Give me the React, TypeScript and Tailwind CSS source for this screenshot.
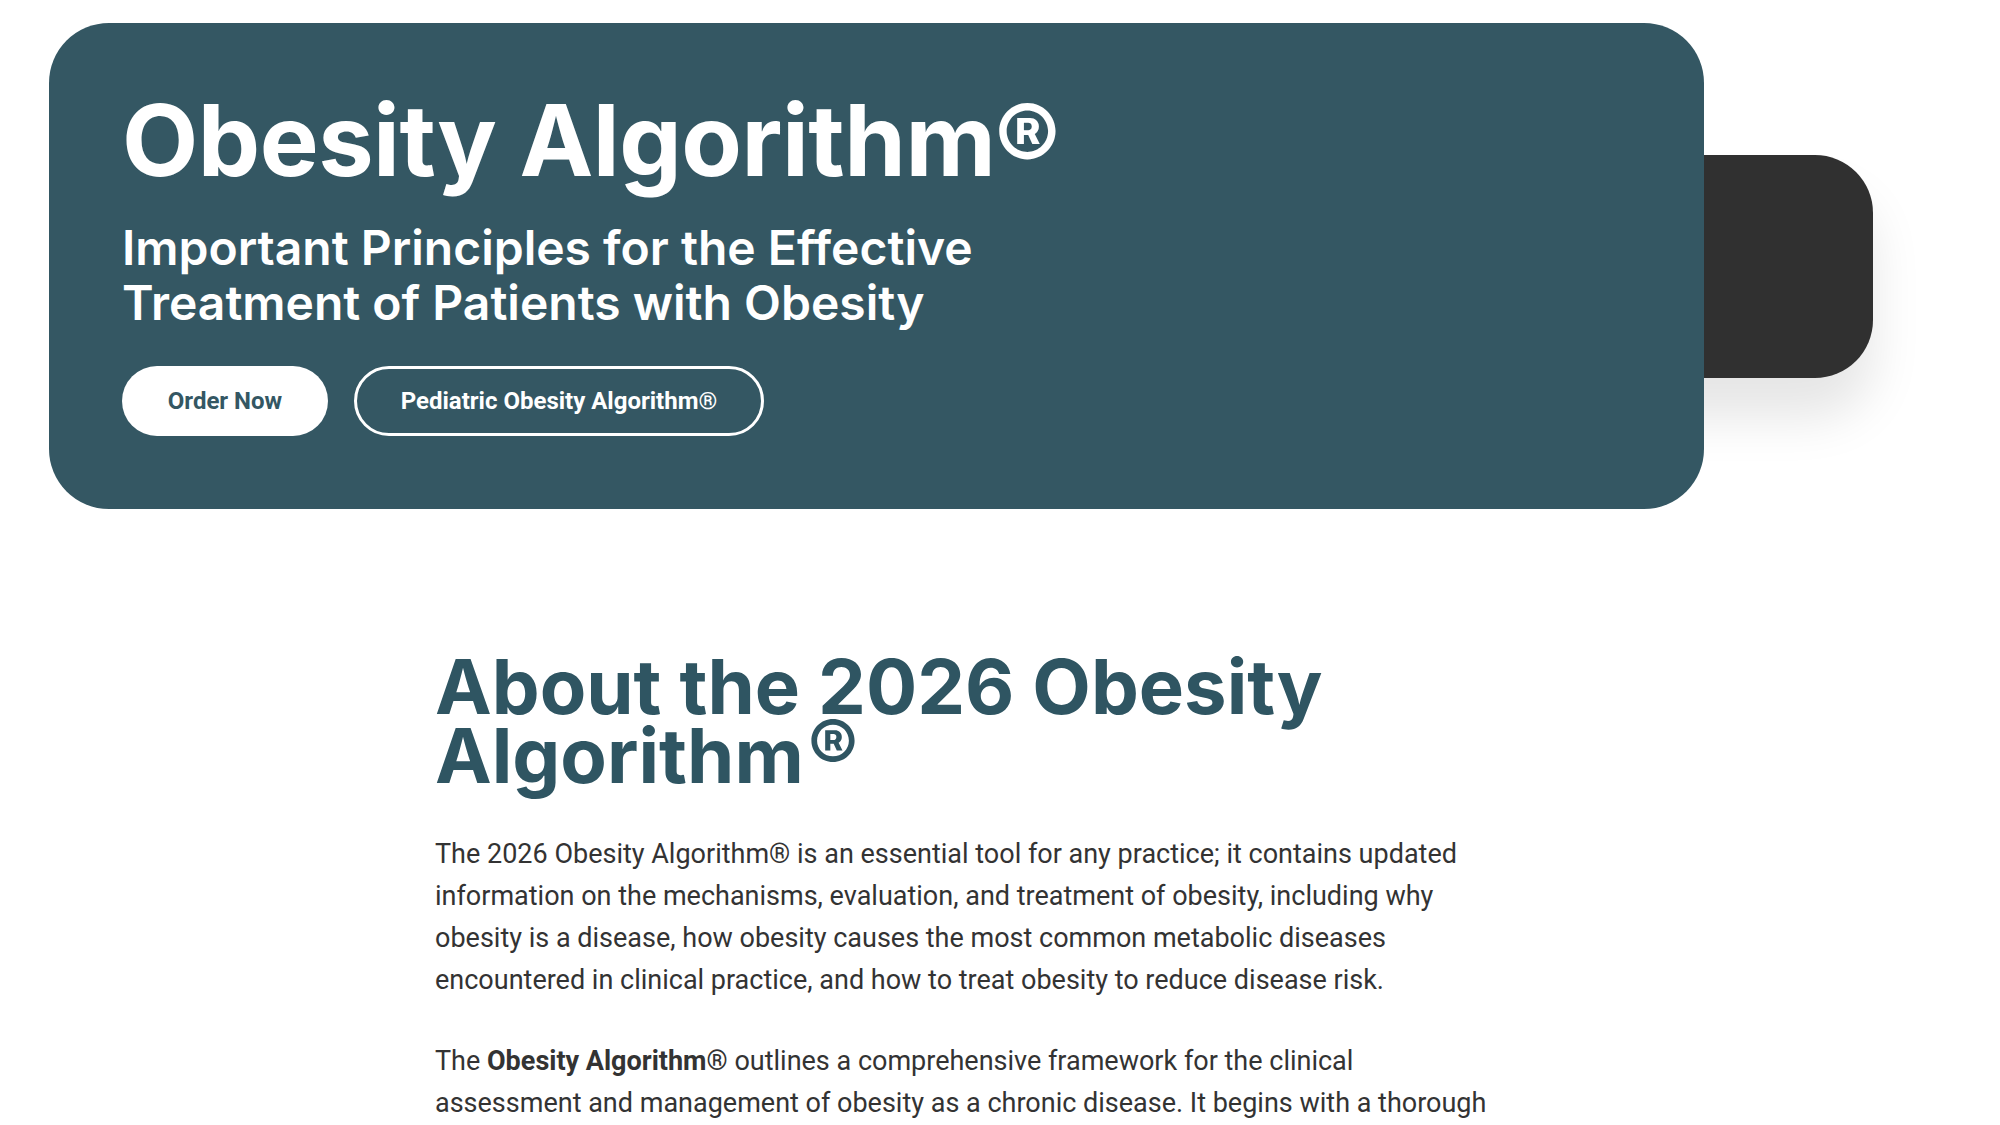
import React from "react";

export default function App() {
  return (
    <div className="min-h-[1125px] w-[2000px] bg-white overflow-hidden" style={{ fontFamily: "Roboto, 'Liberation Sans', sans-serif" }}>
      <div className="pt-[23px] pl-[49px]">
        <div className="relative w-[1655px] h-[486px]">
          <div className="absolute left-[1560px] top-[132px] w-[264px] h-[223px] rounded-[58px] bg-[#303030] shadow-[0_40px_50px_rgba(0,0,0,0.10)]" />
          <div className="relative z-10 h-full rounded-[60px] bg-[#345763] pl-[73px] pt-[68px]">
            <h1 className="text-white font-bold text-[99px] leading-[1] tracking-[-0.5px]" style={{ fontFamily: "Inter, 'Noto Sans', sans-serif" }}>
              Obesity Algorithm®
            </h1>
            <p className="mt-[30px] text-white font-semibold text-[48px] leading-[55px]" style={{ fontFamily: "Inter, 'Noto Sans', sans-serif" }}>
              Important Principles for the Effective
              <br />
              Treatment of Patients with Obesity
            </p>
            <div className="mt-[36px] flex gap-[26px]">
              <button className="h-[70px] w-[206px] rounded-full bg-white text-[#345763] font-bold text-[24px]">
                Order Now
              </button>
              <button className="h-[70px] w-[410px] rounded-full border-[3px] border-white text-white font-bold text-[24px]">
                Pediatric Obesity Algorithm®
              </button>
            </div>
          </div>
        </div>
      </div>

      <div className="pl-[435px] pt-[143px]">
        <div className="w-[1065px]">
          <h2 className="text-[#2f5562] font-bold text-[76px] leading-[69px]" style={{ fontFamily: "Inter, 'Noto Sans', sans-serif" }}>
            About the 2026 Obesity
            <br />
            Algorithm<span className="relative top-[-8px] ml-[4px] text-[76px] leading-[0]">®</span>
          </h2>
          <p className="mt-[43px] text-[#333333] text-[27px] leading-[42px]">
            The 2026 Obesity Algorithm® is an essential tool for any practice; it contains updated information on the mechanisms, evaluation, and treatment of obesity, including why obesity is a disease, how obesity causes the most common metabolic diseases encountered in clinical practice, and how to treat obesity to reduce disease risk.
          </p>
          <p className="mt-[39px] text-[#333333] text-[27px] leading-[42px]">
            The <strong className="font-bold">Obesity Algorithm®</strong> outlines a comprehensive framework for the clinical assessment and management of obesity as a chronic disease. It begins with a thorough patient evaluation, including medical history, physical examination, and laboratory testing, to identify the causes and complications of obesity.
          </p>
        </div>
      </div>
    </div>
  );
}
